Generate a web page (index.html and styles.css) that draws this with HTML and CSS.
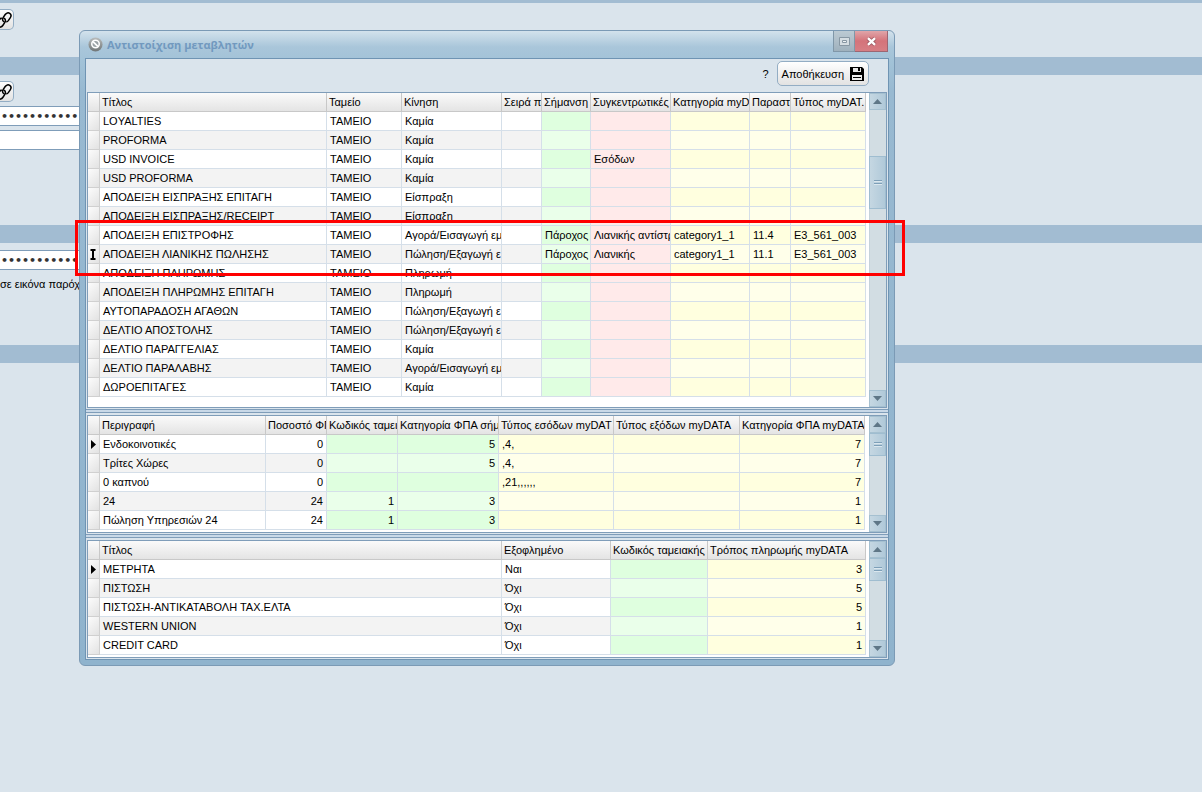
FILE: index.html
```html
<!DOCTYPE html>
<html lang="el">
<head>
<meta charset="utf-8">
<title>Αντιστοίχιση μεταβλητών</title>
<link rel="stylesheet" href="styles.css">
</head>
<body>
<main class="backdrop">
  <section class="section section-first">
    <button class="link-btn" type="button" aria-label="Σύνδεσμος"><svg viewBox="0 0 16 16"><path d="M8 9.800C6.500 8.800 6.200 7 7.300 5.300l1.900-2.800C10.400.8 12.300.4 13.700 1.400s1.700 2.800.5 4.500l-1.900 2.700c-.6.800-1.200 1.200-2 1.400M8 6.200c1.500 1 1.800 2.800.7 4.500l-1.900 2.800c-1.200 1.700-3.100 2.100-4.500 1.100s-1.700-2.800-.5-4.500l1.900-2.700c.6-.8 1.200-1.200 2-1.400"/></svg></button>
  </section>
  <section class="section section-second">
    <button class="link-btn" type="button" aria-label="Σύνδεσμος"><svg viewBox="0 0 16 16"><path d="M8 9.800C6.500 8.800 6.200 7 7.300 5.300l1.900-2.800C10.400.8 12.300.4 13.700 1.400s1.700 2.800.5 4.500l-1.900 2.700c-.6.800-1.200 1.200-2 1.400M8 6.200c1.500 1 1.800 2.800.7 4.500l-1.900 2.800c-1.200 1.700-3.100 2.100-4.500 1.100s-1.700-2.800-.5-4.500l1.900-2.700c.6-.8 1.200-1.200 2-1.400"/></svg></button>
    <input class="field" type="text" aria-label="Κλειδί" value="•••••••••••">
    <input class="field" type="text" aria-label="Τιμή">
  </section>
  <section class="section section-third">
    <input class="field" type="text" aria-label="Κλειδί παρόχου" value="•••••••••••">
    <p class="note">σε εικόνα παρόχ</p>
  </section>
  <section class="section section-last"></section>
</main>

<div class="window" role="dialog" aria-labelledby="win-title">
  <header class="titlebar">
    <svg class="app-icon" viewBox="0 0 16 16"><defs><linearGradient id="ring" x1="0" y1="0" x2="0" y2="1"><stop offset="0" stop-color="#b9bcbc"/><stop offset="1" stop-color="#6f7576"/></linearGradient></defs><circle cx="8" cy="8" r="7.500" fill="url(#ring)"/><circle cx="8" cy="7.500" r="4" fill="#9aa2a5" stroke="#fff" stroke-width="1.600"/><path d="M5.300 5l5.200 5" stroke="#fff" stroke-width="1.800"/></svg>
    <h1 class="title" id="win-title">Αντιστοίχιση μεταβλητών</h1>
    <div class="win-controls">
      <button class="win-btn" type="button" aria-label="Μεγιστοποίηση"><svg viewBox="0 0 11 9"><path d="M.5.5h10v8H.5z" fill="#d5dde2" stroke="#8797a3"/><path d="M3.500 3.500h4v2h-4z" fill="#eef2f4" stroke="#8797a3"/></svg></button>
      <button class="win-btn win-close" type="button" aria-label="Κλείσιμο"><svg viewBox="0 0 11 9"><path d="M2 1.200l7 6.600M9 1.200L2 7.800" stroke="#9c5a62" stroke-width="4"/><path d="M2 1.200l7 6.600M9 1.200L2 7.800" stroke="#fff" stroke-width="2.400"/></svg></button>
    </div>
  </header>
  <div class="client">
    <div class="toolbar">
      <span class="help">?</span>
      <button class="save" type="button">Αποθήκευση <svg viewBox="0 0 14 14"><path d="M0 0h12l2 2v12H0z" fill="#000"/><path d="M3 1h8v4H3z" fill="#e8e8e8"/><path d="M8 1h2v3H8z" fill="#000"/><path d="M2 8h10v5H2z" fill="#eee"/><path d="M3 10.500h8" stroke="#000"/></svg></button>
    </div>

    <div class="grid">
      <div class="sheet">
      <table class="data">
        <colgroup><col class="w12"><col><col class="w75"><col class="w100"><col class="w40"><col class="w49"><col class="w80"><col class="w79"><col class="w41"><col class="w75"></colgroup>
        <thead><tr><th></th><th>Τίτλος</th><th>Ταμείο</th><th>Κίνηση</th><th>Σειρά π</th><th>Σήμανση</th><th>Συγκεντρωτικές</th><th>Κατηγορία myDA</th><th>Παραστ</th><th>Τύπος myDAT.</th></tr></thead>
        <tbody>
          <tr><td></td><td>LOYALTIES</td><td>ΤΑΜΕΙΟ</td><td>Καμία</td><td></td><td class="g"></td><td class="r"></td><td class="y"></td><td class="y"></td><td class="y"></td></tr>
          <tr><td></td><td>PROFORMA</td><td>ΤΑΜΕΙΟ</td><td>Καμία</td><td></td><td class="g"></td><td class="r"></td><td class="y"></td><td class="y"></td><td class="y"></td></tr>
          <tr><td></td><td>USD INVOICE</td><td>ΤΑΜΕΙΟ</td><td>Καμία</td><td></td><td class="g"></td><td class="r">Εσόδων</td><td class="y"></td><td class="y"></td><td class="y"></td></tr>
          <tr><td></td><td>USD PROFORMA</td><td>ΤΑΜΕΙΟ</td><td>Καμία</td><td></td><td class="g"></td><td class="r"></td><td class="y"></td><td class="y"></td><td class="y"></td></tr>
          <tr><td></td><td>ΑΠΟΔΕΙΞΗ ΕΙΣΠΡΑΞΗΣ ΕΠΙΤΑΓΗ</td><td>ΤΑΜΕΙΟ</td><td>Είσπραξη</td><td></td><td class="g"></td><td class="r"></td><td class="y"></td><td class="y"></td><td class="y"></td></tr>
          <tr><td></td><td>ΑΠΟΔΕΙΞΗ ΕΙΣΠΡΑΞΗΣ/RECEIPT</td><td>ΤΑΜΕΙΟ</td><td>Είσπραξη</td><td></td><td class="g"></td><td class="r"></td><td class="y"></td><td class="y"></td><td class="y"></td></tr>
          <tr><td></td><td>ΑΠΟΔΕΙΞΗ ΕΠΙΣΤΡΟΦΗΣ</td><td>ΤΑΜΕΙΟ</td><td>Αγορά/Εισαγωγή εμ</td><td></td><td class="g">Πάροχος</td><td class="r">Λιανικής αντίστρ</td><td class="y">category1_1</td><td class="y">11.4</td><td class="y">E3_561_003</td></tr>
          <tr><td><svg class="mark" viewBox="0 0 8 11"><path d="M1.500 1h5M1.500 10h5M4 1v9" stroke="#000" stroke-width="2"/></svg></td><td>ΑΠΟΔΕΙΞΗ ΛΙΑΝΙΚΗΣ ΠΩΛΗΣΗΣ</td><td>ΤΑΜΕΙΟ</td><td>Πώληση/Εξαγωγή ε</td><td></td><td class="g">Πάροχος</td><td class="r">Λιανικής</td><td class="y">category1_1</td><td class="y">11.1</td><td class="y">E3_561_003</td></tr>
          <tr><td></td><td>ΑΠΟΔΕΙΞΗ ΠΛΗΡΩΜΗΣ</td><td>ΤΑΜΕΙΟ</td><td>Πληρωμή</td><td></td><td class="g"></td><td class="r"></td><td class="y"></td><td class="y"></td><td class="y"></td></tr>
          <tr><td></td><td>ΑΠΟΔΕΙΞΗ ΠΛΗΡΩΜΗΣ ΕΠΙΤΑΓΗ</td><td>ΤΑΜΕΙΟ</td><td>Πληρωμή</td><td></td><td class="g"></td><td class="r"></td><td class="y"></td><td class="y"></td><td class="y"></td></tr>
          <tr><td></td><td>ΑΥΤΟΠΑΡΑΔΟΣΗ ΑΓΑΘΩΝ</td><td>ΤΑΜΕΙΟ</td><td>Πώληση/Εξαγωγή ε</td><td></td><td class="g"></td><td class="r"></td><td class="y"></td><td class="y"></td><td class="y"></td></tr>
          <tr><td></td><td>ΔΕΛΤΙΟ ΑΠΟΣΤΟΛΗΣ</td><td>ΤΑΜΕΙΟ</td><td>Πώληση/Εξαγωγή ε</td><td></td><td class="g"></td><td class="r"></td><td class="y"></td><td class="y"></td><td class="y"></td></tr>
          <tr><td></td><td>ΔΕΛΤΙΟ ΠΑΡΑΓΓΕΛΙΑΣ</td><td>ΤΑΜΕΙΟ</td><td>Καμία</td><td></td><td class="g"></td><td class="r"></td><td class="y"></td><td class="y"></td><td class="y"></td></tr>
          <tr><td></td><td>ΔΕΛΤΙΟ ΠΑΡΑΛΑΒΗΣ</td><td>ΤΑΜΕΙΟ</td><td>Αγορά/Εισαγωγή εμ</td><td></td><td class="g"></td><td class="r"></td><td class="y"></td><td class="y"></td><td class="y"></td></tr>
          <tr><td></td><td>ΔΩΡΟΕΠΙΤΑΓΕΣ</td><td>ΤΑΜΕΙΟ</td><td>Καμία</td><td></td><td class="g"></td><td class="r"></td><td class="y"></td><td class="y"></td><td class="y"></td></tr>
        </tbody>
      </table>
      </div>
      <div class="scroll">
        <button class="scroll-btn" type="button" aria-label="Πάνω"><svg viewBox="0 0 9 5"><path d="M0 5L4.500 0 9 5z"/></svg></button>
        <div class="track track-main"><div class="thumb thumb-main"></div></div>
        <button class="scroll-btn" type="button" aria-label="Κάτω"><svg viewBox="0 0 9 5"><path d="M0 0l4.500 5L9 0z"/></svg></button>
      </div>
    </div>

    <div class="splitter"></div>

    <div class="grid">
      <div class="sheet sheet-wide">
      <table class="data">
        <colgroup><col class="w12"><col><col class="w61"><col class="w71"><col class="w101"><col class="w115"><col class="w126"><col class="w125"></colgroup>
        <thead><tr><th></th><th>Περιγραφή</th><th>Ποσοστό ΦΠ</th><th>Κωδικός ταμει</th><th>Κατηγορία ΦΠΑ σήμ</th><th>Τύπος εσόδων myDAT</th><th>Τύπος εξόδων myDATA</th><th>Κατηγορία ΦΠΑ myDATA</th></tr></thead>
        <tbody>
          <tr><td><svg class="mark" viewBox="0 0 8 11"><path d="M2 1l5 4.500L2 10z"/></svg></td><td>Ενδοκοινοτικές</td><td class="n">0</td><td class="g n"></td><td class="g n">5</td><td class="y">,4,</td><td class="y"></td><td class="y n">7</td></tr>
          <tr><td></td><td>Τρίτες Χώρες</td><td class="n">0</td><td class="g n"></td><td class="g n">5</td><td class="y">,4,</td><td class="y"></td><td class="y n">7</td></tr>
          <tr><td></td><td>0 καπνού</td><td class="n">0</td><td class="g n"></td><td class="g n"></td><td class="y">,21,,,,,,</td><td class="y"></td><td class="y n">7</td></tr>
          <tr><td></td><td>24</td><td class="n">24</td><td class="g n">1</td><td class="g n">3</td><td class="y"></td><td class="y"></td><td class="y n">1</td></tr>
          <tr><td></td><td>Πώληση Υπηρεσιών 24</td><td class="n">24</td><td class="g n">1</td><td class="g n">3</td><td class="y"></td><td class="y"></td><td class="y n">1</td></tr>
        </tbody>
      </table>
      </div>
      <div class="scroll">
        <button class="scroll-btn" type="button" aria-label="Πάνω"><svg viewBox="0 0 9 5"><path d="M0 5L4.500 0 9 5z"/></svg></button>
        <div class="track"><div class="thumb"></div></div>
        <button class="scroll-btn" type="button" aria-label="Κάτω"><svg viewBox="0 0 9 5"><path d="M0 0l4.500 5L9 0z"/></svg></button>
      </div>
    </div>

    <div class="splitter"></div>

    <div class="grid">
      <div class="sheet">
      <table class="data">
        <colgroup><col class="w12"><col><col class="w109"><col class="w97"><col class="w158"></colgroup>
        <thead><tr><th></th><th>Τίτλος</th><th>Εξοφλημένο</th><th>Κωδικός ταμειακής</th><th>Τρόπος πληρωμής myDATA</th></tr></thead>
        <tbody>
          <tr><td><svg class="mark" viewBox="0 0 8 11"><path d="M2 1l5 4.500L2 10z"/></svg></td><td>ΜΕΤΡΗΤΑ</td><td>Ναι</td><td class="g"></td><td class="y n">3</td></tr>
          <tr><td></td><td>ΠΙΣΤΩΣΗ</td><td>Όχι</td><td class="g"></td><td class="y n">5</td></tr>
          <tr><td></td><td>ΠΙΣΤΩΣΗ-ΑΝΤΙΚΑΤΑΒΟΛΗ ΤΑΧ.ΕΛΤΑ</td><td>Όχι</td><td class="g"></td><td class="y n">5</td></tr>
          <tr><td></td><td>WESTERN UNION</td><td>Όχι</td><td class="g"></td><td class="y n">1</td></tr>
          <tr><td></td><td>CREDIT CARD</td><td>Όχι</td><td class="g"></td><td class="y n">1</td></tr>
        </tbody>
      </table>
      </div>
      <div class="scroll">
        <button class="scroll-btn" type="button" aria-label="Πάνω"><svg viewBox="0 0 9 5"><path d="M0 5L4.500 0 9 5z"/></svg></button>
        <div class="track"><div class="thumb"></div></div>
        <button class="scroll-btn" type="button" aria-label="Κάτω"><svg viewBox="0 0 9 5"><path d="M0 0l4.500 5L9 0z"/></svg></button>
      </div>
    </div>
  </div>
  <div class="highlight"></div>
</div>
</body>
</html>
```
FILE: styles.css
```css
* { box-sizing: border-box; }

body {
  margin: 0;
  min-height: 100vh;
  background: #dae4ec;
  color: #000;
  font: 11px/18px "Liberation Sans", Arial, sans-serif;
  overflow: hidden;
}

button, input { font: inherit; color: inherit; margin: 0; padding: 0; }
svg { display: block; fill: none; }

/* Form behind the dialog */
.section { display: flex; flex-direction: column; align-items: flex-start; border-top: 18px solid #a2bcd2; }
.section-first { border-top-width: 3px; padding-top: 6px; height: 57px; }
.section-second { padding-top: 6px; gap: 4px; height: 168px; }
.section-third { padding-top: 7px; gap: 5px; height: 120px; }
.section-last { height: 18px; }

.link-btn {
  width: 14px;
  height: 21px;
  padding-right: 1px;
  border: 1px solid #93adc4;
  border-left: 0;
  border-radius: 0 5px 5px 0;
  background: linear-gradient(#fdfdfd, #e2e2e2);
  display: flex;
  align-items: center;
  justify-content: flex-end;
  overflow: hidden;
}
.link-btn svg { width: 16px; height: 16px; flex: none; stroke: #000; stroke-width: 1.5; }

.field {
  width: 120px;
  height: 20px;
  padding-left: 1px;
  border: 1px solid #7f9db9;
  border-left: 0;
  background: #fff;
  color: #333;
  font: bold 11px/18px "DejaVu Sans", sans-serif;
}
.note { margin: 0; white-space: nowrap; }

/* Dialog */
.window {
  position: absolute;
  top: 30px;
  left: 79px;
  right: 307px;
  min-width: 720px;
  padding: 0 5px 5px;
  border: 1px solid #7b9ab5;
  border-radius: 6px;
  background: linear-gradient(#d3e2ec, #a9c6da 16px, #a3c3d8 28px, #98b9d1 60px, #8fb3cd);
}
.titlebar { display: flex; align-items: flex-start; height: 27px; padding: 6px 1px 0 3px; gap: 4px; }
.app-icon { width: 15px; height: 15px; }
.title { margin: 0; flex: 1; font: bold 11px/16px "Open Sans", sans-serif; color: #7199bf; }
.win-controls { display: flex; margin-top: -6px; }
.win-btn {
  width: 22px;
  height: 21px;
  border: 1px solid #8097a8;
  border-top: 0;
  background: linear-gradient(#bccad3, #9fb1bd);
  display: grid;
  place-items: center;
}
.win-btn svg { width: 11px; height: 9px; overflow: visible; }
.win-close { width: 33px; border-color: #9c6672; border-left: 0; background: linear-gradient(#e0a5a9, #d4737a 50%, #d67e84); }

.client { border: 1px solid #6f94b3; background: #dae4ec; padding: 0 1px 1px; }
.toolbar { display: flex; align-items: center; justify-content: flex-end; gap: 8px; height: 33px; padding: 0 18px 4px; }
.save {
  display: flex;
  align-items: center;
  gap: 6px;
  height: 25px;
  padding: 0 4px;
  border: 1px solid #93adc4;
  border-radius: 5px;
  background: linear-gradient(#fff, #f0f0f0 50%, #e2e2e2);
}
.save svg { width: 14px; height: 14px; }

.grid { display: flex; border: 1px solid #7f9db9; background: #fff; }
.sheet { flex: 1; min-width: 0; padding: 0 3px 2px 0; }
.sheet-wide { padding-right: 4px; }
.splitter { height: 7px; margin: 0 -1px; border: solid #dae4ec; border-width: 1px 0 2px; background: linear-gradient(#7f9db9 1px, #c9d9e8 1px, #c9d9e8 3px, #7f9db9 3px); }

.data { width: 100%; table-layout: fixed; border-collapse: separate; border-spacing: 0; }
.data th, .data td { height: 19px; overflow: hidden; white-space: nowrap; text-align: left; font-weight: normal; line-height: 18px; }
.data th {
  padding: 0 0 0 2px;
  border-right: 1px solid #c8c8c8;
  border-bottom: 1px solid #c8c8c8;
  background: linear-gradient(#fafafa, #e4e4e4);
}
.data td { padding: 0 0 0 3px; border-right: 1px solid #d5dfe9; border-bottom: 1px solid #d5dfe9; background: #fff; }
.data tr:nth-child(even) td { background: #f3f3f3; }
.data tr td:first-child { padding: 0; border-color: #d0d0d0; background: linear-gradient(135deg, #fcfcfc, #e2e2e2); }
.data tr .g { background: #dfffdf; }
.data tr .r, .data tr:nth-child(even) .r { background: #ffeaea; }
.data tr .y { background: #ffffdf; }
.data tr:nth-child(even) .g { background: #eaffea; }
.data tr:nth-child(even) .y { background: #ffffea; }
.data td.n { text-align: right; padding-right: 3px; }
.mark { width: 8px; height: 11px; margin: 0 auto 0 1px; }
.mark path:not([stroke]) { fill: #000; }

.w12 { width: 12px; } .w40 { width: 40px; } .w41 { width: 41px; } .w49 { width: 49px; }
.w61 { width: 61px; } .w71 { width: 71px; } .w75 { width: 75px; } .w79 { width: 79px; }
.w80 { width: 80px; } .w97 { width: 97px; } .w100 { width: 100px; } .w101 { width: 101px; }
.w109 { width: 109px; } .w115 { width: 115px; } .w125 { width: 125px; } .w126 { width: 126px; }
.w158 { width: 158px; }

.scroll { display: flex; flex-direction: column; width: 17px; background: #d2dde3; }
.scroll-btn {
  height: 17px;
  border: 1px solid #a5c0d0;
  background: linear-gradient(to right, #c5d7e2, #b0c9d9);
  display: grid;
  place-items: center;
}
.scroll-btn svg { width: 9px; height: 5px; fill: #5f7787; }
.track { flex: 1; border-left: 1px solid #c5d2da; }
.thumb {
  height: 23px;
  margin-left: -1px;
  border: 1px solid #9fbdd0;
  background: linear-gradient(#7d9fb8 1px, #dbe7ee 1px, #dbe7ee 2px, transparent 2px, transparent 3px, #7d9fb8 3px, #7d9fb8 4px, #dbe7ee 4px) center / 8px 5px no-repeat, linear-gradient(to right, #c5d7e2, #b0c9d9);
}
.track-main { padding-top: 46px; min-height: 280px; }
.thumb-main { height: 53px; }

/* Marked rows */
.highlight { position: absolute; top: 189px; left: -5px; right: -11px; height: 56px; border: 3px solid #f00; pointer-events: none; }
```
